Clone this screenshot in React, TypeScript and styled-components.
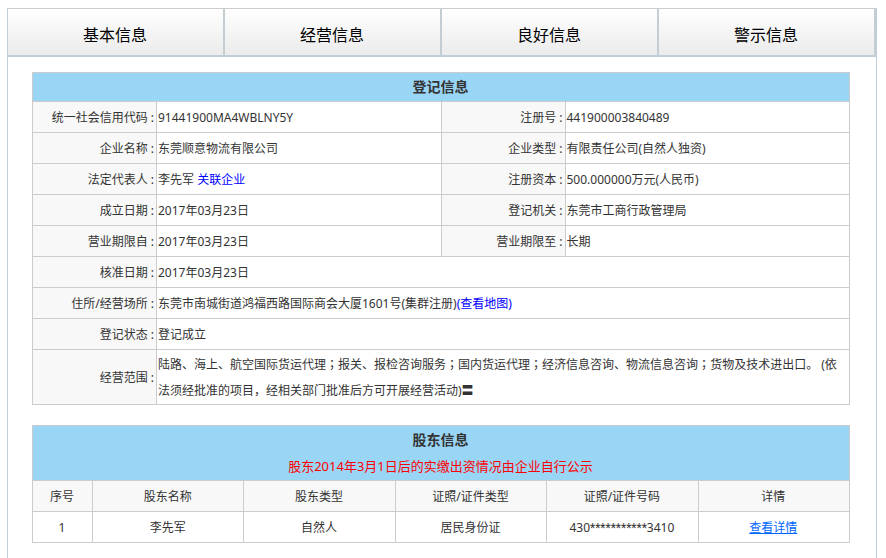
import React from 'react';
import styled, { createGlobalStyle } from 'styled-components';

const GlobalStyle = createGlobalStyle`
  body {
    margin: 0;
    background: #fff;
    color: #333;
    font-family: 'Noto Sans', 'Noto Sans CJK SC', sans-serif;
    font-size: 12px;
    line-height: 26px;
  }
`;

const Panel = styled.main`
  box-sizing: border-box;
  margin: 8px 9px 0 7px;
  min-height: calc(100vh - 8px);
  border: 1px solid #bfcfdb;
  border-top-color: #ccc;
  border-bottom: 0;
`;

const TabBar = styled.nav`
  display: grid;
  grid-template-columns: repeat(4, 1fr);
  border-bottom: 2px solid #bccfdb;
`;

const Tab = styled.button`
  height: 46px;
  padding: 6px 1px 0 0;
  border: 0;
  border-right: 2px solid #c4ced2;
  background: linear-gradient(#fff, #ebebeb);
  color: #000;
  font: inherit;
  font-size: 16px;
  cursor: pointer;
`;

const Content = styled.div`
  display: grid;
  gap: 20px;
  padding: 15px 26px 15px 24px;
`;

const Table = styled.table`
  width: 100%;
  table-layout: fixed;
  border-collapse: collapse;
`;

const LabelCol = styled.col`
  width: 124px;
`;

const IndexCol = styled.col`
  width: 60px;
`;

const Title = styled.th`
  padding: 1px 2px 1px 1px;
  border: 1px solid #ccc;
  background: #99d6f6;
  font-size: 14px;
  font-weight: 700;
`;

const Notice = styled.div`
  color: #f00;
  font-size: 13px;
  font-weight: 400;
`;

const Label = styled.th`
  padding: 3px 2px 1px 1px;
  border: 1px solid #ccc;
  background: #f8f8f8;
  font-weight: 400;
  text-align: right;
`;

const Value = styled.td<{ $multiline?: boolean }>`
  padding: ${({ $multiline }) => ($multiline ? '2px 8px 0 1px' : '3px 1px 1px')};
  border: 1px solid #ccc;
`;

const ColumnHead = styled.th`
  padding: 3px 1px 1px 0;
  border: 1px solid #ccc;
  background: #f8f8f8;
  font-weight: 400;
`;

const Cell = styled.td`
  padding: 3px 1px 1px 0;
  border: 1px solid #ccc;
  text-align: center;
`;

const Link = styled.a`
  color: #00f;
  text-decoration: none;
`;

const DetailLink = styled.a`
  color: #06f;
  text-decoration: underline;
`;

const CenteredMark = styled.span`
  font-family: 'Noto Sans CJK JP', sans-serif;
  line-height: 1;
`;

const Mask = styled.span`
  font-family: Roboto, sans-serif;
  line-height: 1;
`;

const Semicolon = () => <CenteredMark lang="ja">；</CenteredMark>;

type Field = { label: string; value: React.ReactNode; multiline?: boolean };

const scope = [
  '陆路、海上、航空国际货运代理',
  '报关、报检咨询服务',
  '国内货运代理',
  '经济信息咨询、物流信息咨询',
  '货物及技术进出口。 (依法须经批准的项目，经相关部门批准后方可开展经营活动)〓',
];

const rows: Field[][] = [
  [
    { label: '统一社会信用代码', value: '91441900MA4WBLNY5Y' },
    { label: '注册号', value: '441900003840489' },
  ],
  [
    { label: '企业名称', value: '东莞顺意物流有限公司' },
    { label: '企业类型', value: '有限责任公司(自然人独资)' },
  ],
  [
    { label: '法定代表人', value: <>李先军 <Link href="#related">关联企业</Link></> },
    { label: '注册资本', value: '500.000000万元(人民币)' },
  ],
  [
    { label: '成立日期', value: '2017年03月23日' },
    { label: '登记机关', value: '东莞市工商行政管理局' },
  ],
  [
    { label: '营业期限自', value: '2017年03月23日' },
    { label: '营业期限至', value: '长期' },
  ],
  [{ label: '核准日期', value: '2017年03月23日' }],
  [
    {
      label: '住所/经营场所',
      value: <>东莞市南城街道鸿福西路国际商会大厦1601号(集群注册)<Link href="#map">(查看地图)</Link></>,
    },
  ],
  [{ label: '登记状态', value: '登记成立' }],
  [
    {
      label: '经营范围',
      multiline: true,
      value: scope.map((part, i) => (
        <React.Fragment key={part}>
          {i > 0 && <Semicolon />}
          {part}
        </React.Fragment>
      )),
    },
  ],
];

const tabs = ['基本信息', '经营信息', '良好信息', '警示信息'];
const columns = ['序号', '股东名称', '股东类型', '证照/证件类型', '证照/证件号码', '详情'];
const holders = [
  {
    index: '1',
    name: '李先军',
    type: '自然人',
    document: '居民身份证',
    number: ['430', '***********', '3410'],
  },
];

export default function App() {
  return (
    <>
      <GlobalStyle />
      <Panel lang="zh-CN">
        <TabBar>
          {tabs.map((tab) => (
            <Tab key={tab} type="button">{tab}</Tab>
          ))}
        </TabBar>
        <Content>
          <Table>
            <colgroup>
              <LabelCol />
              <col />
              <LabelCol />
              <col />
            </colgroup>
            <thead>
              <tr>
                <Title colSpan={4}>登记信息</Title>
              </tr>
            </thead>
            <tbody>
              {rows.map((fields) => (
                <tr key={fields[0].label}>
                  {fields.map((field) => (
                    <React.Fragment key={field.label}>
                      <Label scope="row">{field.label} :</Label>
                      <Value colSpan={fields.length === 1 ? 3 : 1} $multiline={field.multiline}>
                        {field.value}
                      </Value>
                    </React.Fragment>
                  ))}
                </tr>
              ))}
            </tbody>
          </Table>
          <Table>
            <colgroup>
              <IndexCol />
              <col span={5} />
            </colgroup>
            <thead>
              <tr>
                <Title colSpan={6}>
                  股东信息
                  <Notice>股东2014年3月1日后的实缴出资情况由企业自行公示</Notice>
                </Title>
              </tr>
              <tr>
                {columns.map((column) => (
                  <ColumnHead key={column} scope="col">{column}</ColumnHead>
                ))}
              </tr>
            </thead>
            <tbody>
              {holders.map((holder) => (
                <tr key={holder.index}>
                  <Cell>{holder.index}</Cell>
                  <Cell>{holder.name}</Cell>
                  <Cell>{holder.type}</Cell>
                  <Cell>{holder.document}</Cell>
                  <Cell>
                    {holder.number[0]}
                    <Mask>{holder.number[1]}</Mask>
                    {holder.number[2]}
                  </Cell>
                  <Cell>
                    <DetailLink href="#detail">查看详情</DetailLink>
                  </Cell>
                </tr>
              ))}
            </tbody>
          </Table>
        </Content>
      </Panel>
    </>
  );
}
